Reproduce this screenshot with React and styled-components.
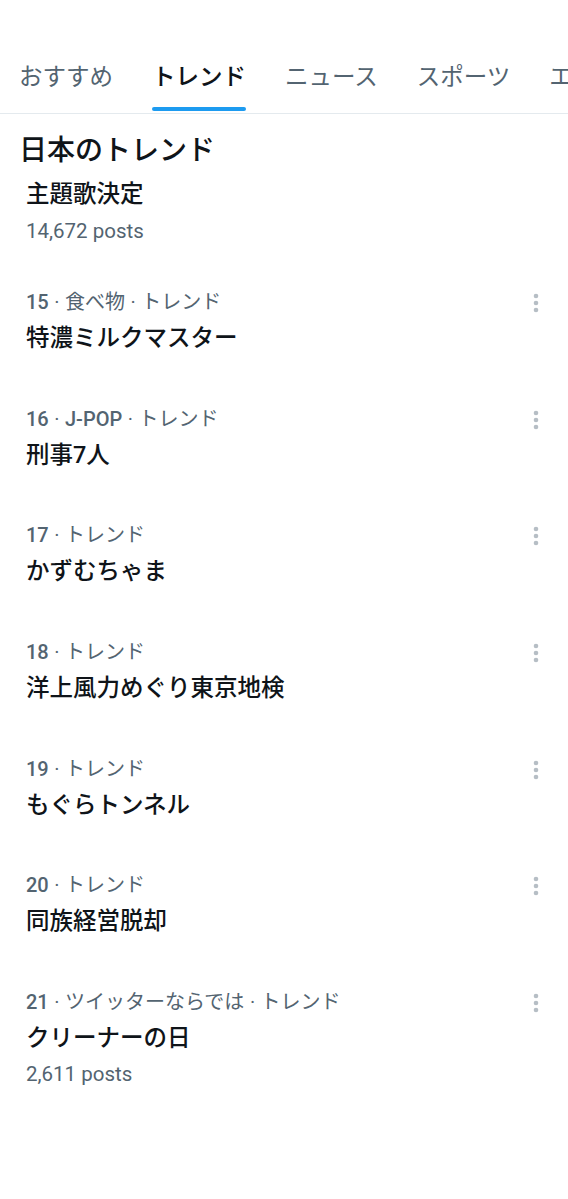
import React from 'react';
import styled, { createGlobalStyle } from 'styled-components';

const GlobalStyle = createGlobalStyle`
  html, body {
    margin: 0;
    padding: 0;
    background: #fff;
  }
  body {
    font-family: Roboto, "Noto Sans CJK JP", "Noto Sans", sans-serif;
    color: #0f1419;
  }
`;

const Page = styled.div`
  width: 568px;
  min-height: 1199px;
  background: #fff;
  overflow: hidden;
`;

const TabBar = styled.nav`
  display: flex;
  gap: 39px;
  padding-left: 19px;
  border-bottom: 1px solid #e4eaee;
  white-space: nowrap;
  overflow: hidden;
`;

const Tab = styled.div`
  display: flex;
  flex-direction: column;
  align-items: stretch;
  padding-top: 62px;
  flex-shrink: 0;
`;

const TabLabel = styled.span`
  font-size: 23.5px;
  line-height: 30px;
  font-weight: ${(p) => (p.$active ? 500 : 400)};
  color: ${(p) => (p.$active ? '#0f1419' : '#536471')};
`;

const Underline = styled.span`
  display: block;
  height: 4px;
  margin-top: 15px;
  margin-bottom: 2px;
  border-radius: 2px;
  background: ${(p) => (p.$active ? '#1d9bf0' : 'transparent')};
`;

const Heading = styled.h2`
  margin: 0;
  padding: 19px 20px 0 19px;
  font-size: 28px;
  line-height: 36px;
  font-weight: 500;
  color: #0f1419;
`;

const Featured = styled.div`
  padding: 9px 26px 19px;
`;

const Title = styled.div`
  font-size: 23.5px;
  line-height: 32px;
  font-weight: 500;
  color: #0f1419;
`;

const Posts = styled.div`
  margin-top: ${(p) => p.$gap || 8}px;
  font-size: 20.5px;
  line-height: 26px;
  color: #536471;
`;

const List = styled.div`
  display: flex;
  flex-direction: column;
`;

const Item = styled.div`
  display: flex;
  align-items: flex-start;
  padding: 25px 22px 25.67px 26px;
`;

const Body = styled.div`
  flex: 1;
  min-width: 0;
  display: flex;
  flex-direction: column;
  gap: 6px;
`;

const Meta = styled.div`
  font-size: 20px;
  line-height: 28px;
  color: #536471;
  white-space: nowrap;
`;

const Latin = styled.span`
  font-weight: 500;
`;

const Sep = styled.span`
  margin: 0 5.5px;
`;

const More = styled.button`
  width: 20px;
  height: 28px;
  padding: 0;
  margin-top: 1px;
  border: none;
  background: none;
  display: flex;
  align-items: center;
  justify-content: center;
`;

const MoreIcon = () => (
  <svg width="8" height="20" viewBox="0 0 8 20">
    <circle cx="4" cy="3" r="2.3" fill="#b6bec5" />
    <circle cx="4" cy="10" r="2.3" fill="#b6bec5" />
    <circle cx="4" cy="17" r="2.3" fill="#b6bec5" />
  </svg>
);

const tabs = ['おすすめ', 'トレンド', 'ニュース', 'スポーツ', 'エンタメ'];

const trends = [
  { rank: '15', parts: ['食べ物', 'トレンド'], title: '特濃ミルクマスター' },
  { rank: '16', parts: [{ latin: 'J-POP' }, 'トレンド'], title: '刑事7人' },
  { rank: '17', parts: ['トレンド'], title: 'かずむちゃま' },
  { rank: '18', parts: ['トレンド'], title: '洋上風力めぐり東京地検' },
  { rank: '19', parts: ['トレンド'], title: 'もぐらトンネル' },
  { rank: '20', parts: ['トレンド'], title: '同族経営脱却' },
  { rank: '21', parts: ['ツイッターならでは', 'トレンド'], title: 'クリーナーの日', posts: '2,611 posts' },
];

const App = () => (
  <Page>
    <GlobalStyle />
    <TabBar>
      {tabs.map((t) => (
        <Tab key={t}>
          <TabLabel $active={t === 'トレンド'}>{t}</TabLabel>
          <Underline $active={t === 'トレンド'} />
        </Tab>
      ))}
    </TabBar>

    <Heading>日本のトレンド</Heading>
    <Featured>
      <Title>主題歌決定</Title>
      <Posts>14,672 posts</Posts>
    </Featured>

    <List>
      {trends.map((t) => (
        <Item key={t.rank}>
          <Body>
            <Meta>
              <Latin>{t.rank}</Latin>
              {t.parts.map((p, i) => (
                <React.Fragment key={i}>
                  <Sep>·</Sep>
                  {typeof p === 'string' ? p : <Latin>{p.latin}</Latin>}
                </React.Fragment>
              ))}
            </Meta>
            <Title>{t.title}</Title>
            {t.posts && <Posts $gap={1}>{t.posts}</Posts>}
          </Body>
          <More aria-label="その他">
            <MoreIcon />
          </More>
        </Item>
      ))}
    </List>
  </Page>
);

export default App;
